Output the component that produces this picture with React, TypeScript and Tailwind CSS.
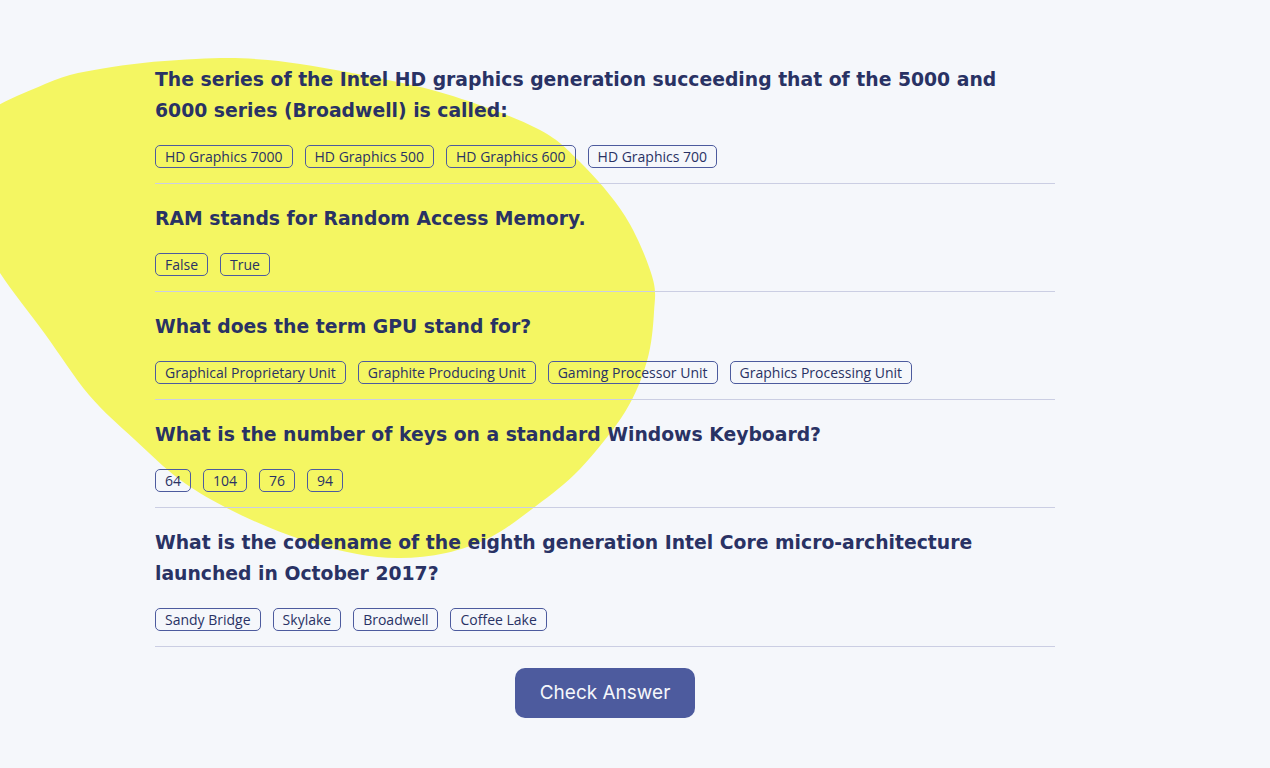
import React from "react";

const questions = [
  {
    q: "The series of the Intel HD graphics generation succeeding that of the 5000 and 6000 series (Broadwell) is called:",
    a: ["HD Graphics 7000", "HD Graphics 500", "HD Graphics 600", "HD Graphics 700"],
  },
  { q: "RAM stands for Random Access Memory.", a: ["False", "True"] },
  {
    q: "What does the term GPU stand for?",
    a: ["Graphical Proprietary Unit", "Graphite Producing Unit", "Gaming Processor Unit", "Graphics Processing Unit"],
  },
  { q: "What is the number of keys on a standard Windows Keyboard?", a: ["64", "104", "76", "94"] },
  {
    q: "What is the codename of the eighth generation Intel Core micro-architecture launched in October 2017?",
    a: ["Sandy Bridge", "Skylake", "Broadwell", "Coffee Lake"],
  },
];

// outline of the yellow blob, clockwise
const blobPts: [number, number][] = [
  [-30, 130], [45, 84], [112, 67], [196, 59], [268, 60], [357, 74], [446, 94], [536, 128],
  [580, 162], [625, 216], [652, 276], [654, 312], [647, 361], [625, 412], [580, 469],
  [536, 506], [491, 537], [446, 553], [400, 558], [357, 554], [312, 543], [268, 527],
  [223, 506], [179, 479], [134, 439], [89, 395], [45, 334], [0, 273], [-30, 220],
];

function smoothPath(pts: [number, number][]) {
  const n = pts.length;
  let d = `M${pts[0][0]},${pts[0][1]}`;
  for (let i = 0; i < n; i++) {
    const p0 = pts[(i - 1 + n) % n];
    const p1 = pts[i];
    const p2 = pts[(i + 1) % n];
    const p3 = pts[(i + 2) % n];
    const c1x = p1[0] + (p2[0] - p0[0]) / 6;
    const c1y = p1[1] + (p2[1] - p0[1]) / 6;
    const c2x = p2[0] - (p3[0] - p1[0]) / 6;
    const c2y = p2[1] - (p3[1] - p1[1]) / 6;
    d += ` C${c1x},${c1y} ${c2x},${c2y} ${p2[0]},${p2[1]}`;
  }
  return d + "Z";
}

function Blob() {
  return (
    <svg className="absolute left-0 top-0 pointer-events-none" width="700" height="600" viewBox="0 0 700 600">
      <path d={smoothPath(blobPts)} fill="#F4F662" />
    </svg>
  );
}

export default function App() {
  return (
    <div className="relative min-h-[768px] w-full overflow-hidden bg-[#F5F7FB] text-[#293264]">
      <Blob />
      <div className="relative ml-[155px] w-[900px] pt-[64px]">
        {questions.map((item, i) => (
          <div key={i} className={`border-b border-[#CBCEE3] pb-[15px] ${i === 0 ? "" : "pt-[19px]"}`}>
            <h2 className="pr-[20px] text-[18.8px] font-bold leading-[31px] font-['DejaVu_Sans',sans-serif]">{item.q}</h2>
            <div className="mt-[19px] flex gap-3">
              {item.a.map((ans) => (
                <button
                  key={ans}
                  className="h-[23px] rounded-[5px] border border-[#4D5B9E] px-[9px] text-[14px] leading-none text-[#293264] font-['Open_Sans',sans-serif]"
                >
                  {ans}
                </button>
              ))}
            </div>
          </div>
        ))}
        <div className="flex justify-center pt-[21px]">
          <button className="h-[50px] w-[180px] rounded-[10px] bg-[#4D5B9E] text-[19px] text-[#F5F7FB] font-['Inter',sans-serif]">
            Check Answer
          </button>
        </div>
      </div>
    </div>
  );
}
